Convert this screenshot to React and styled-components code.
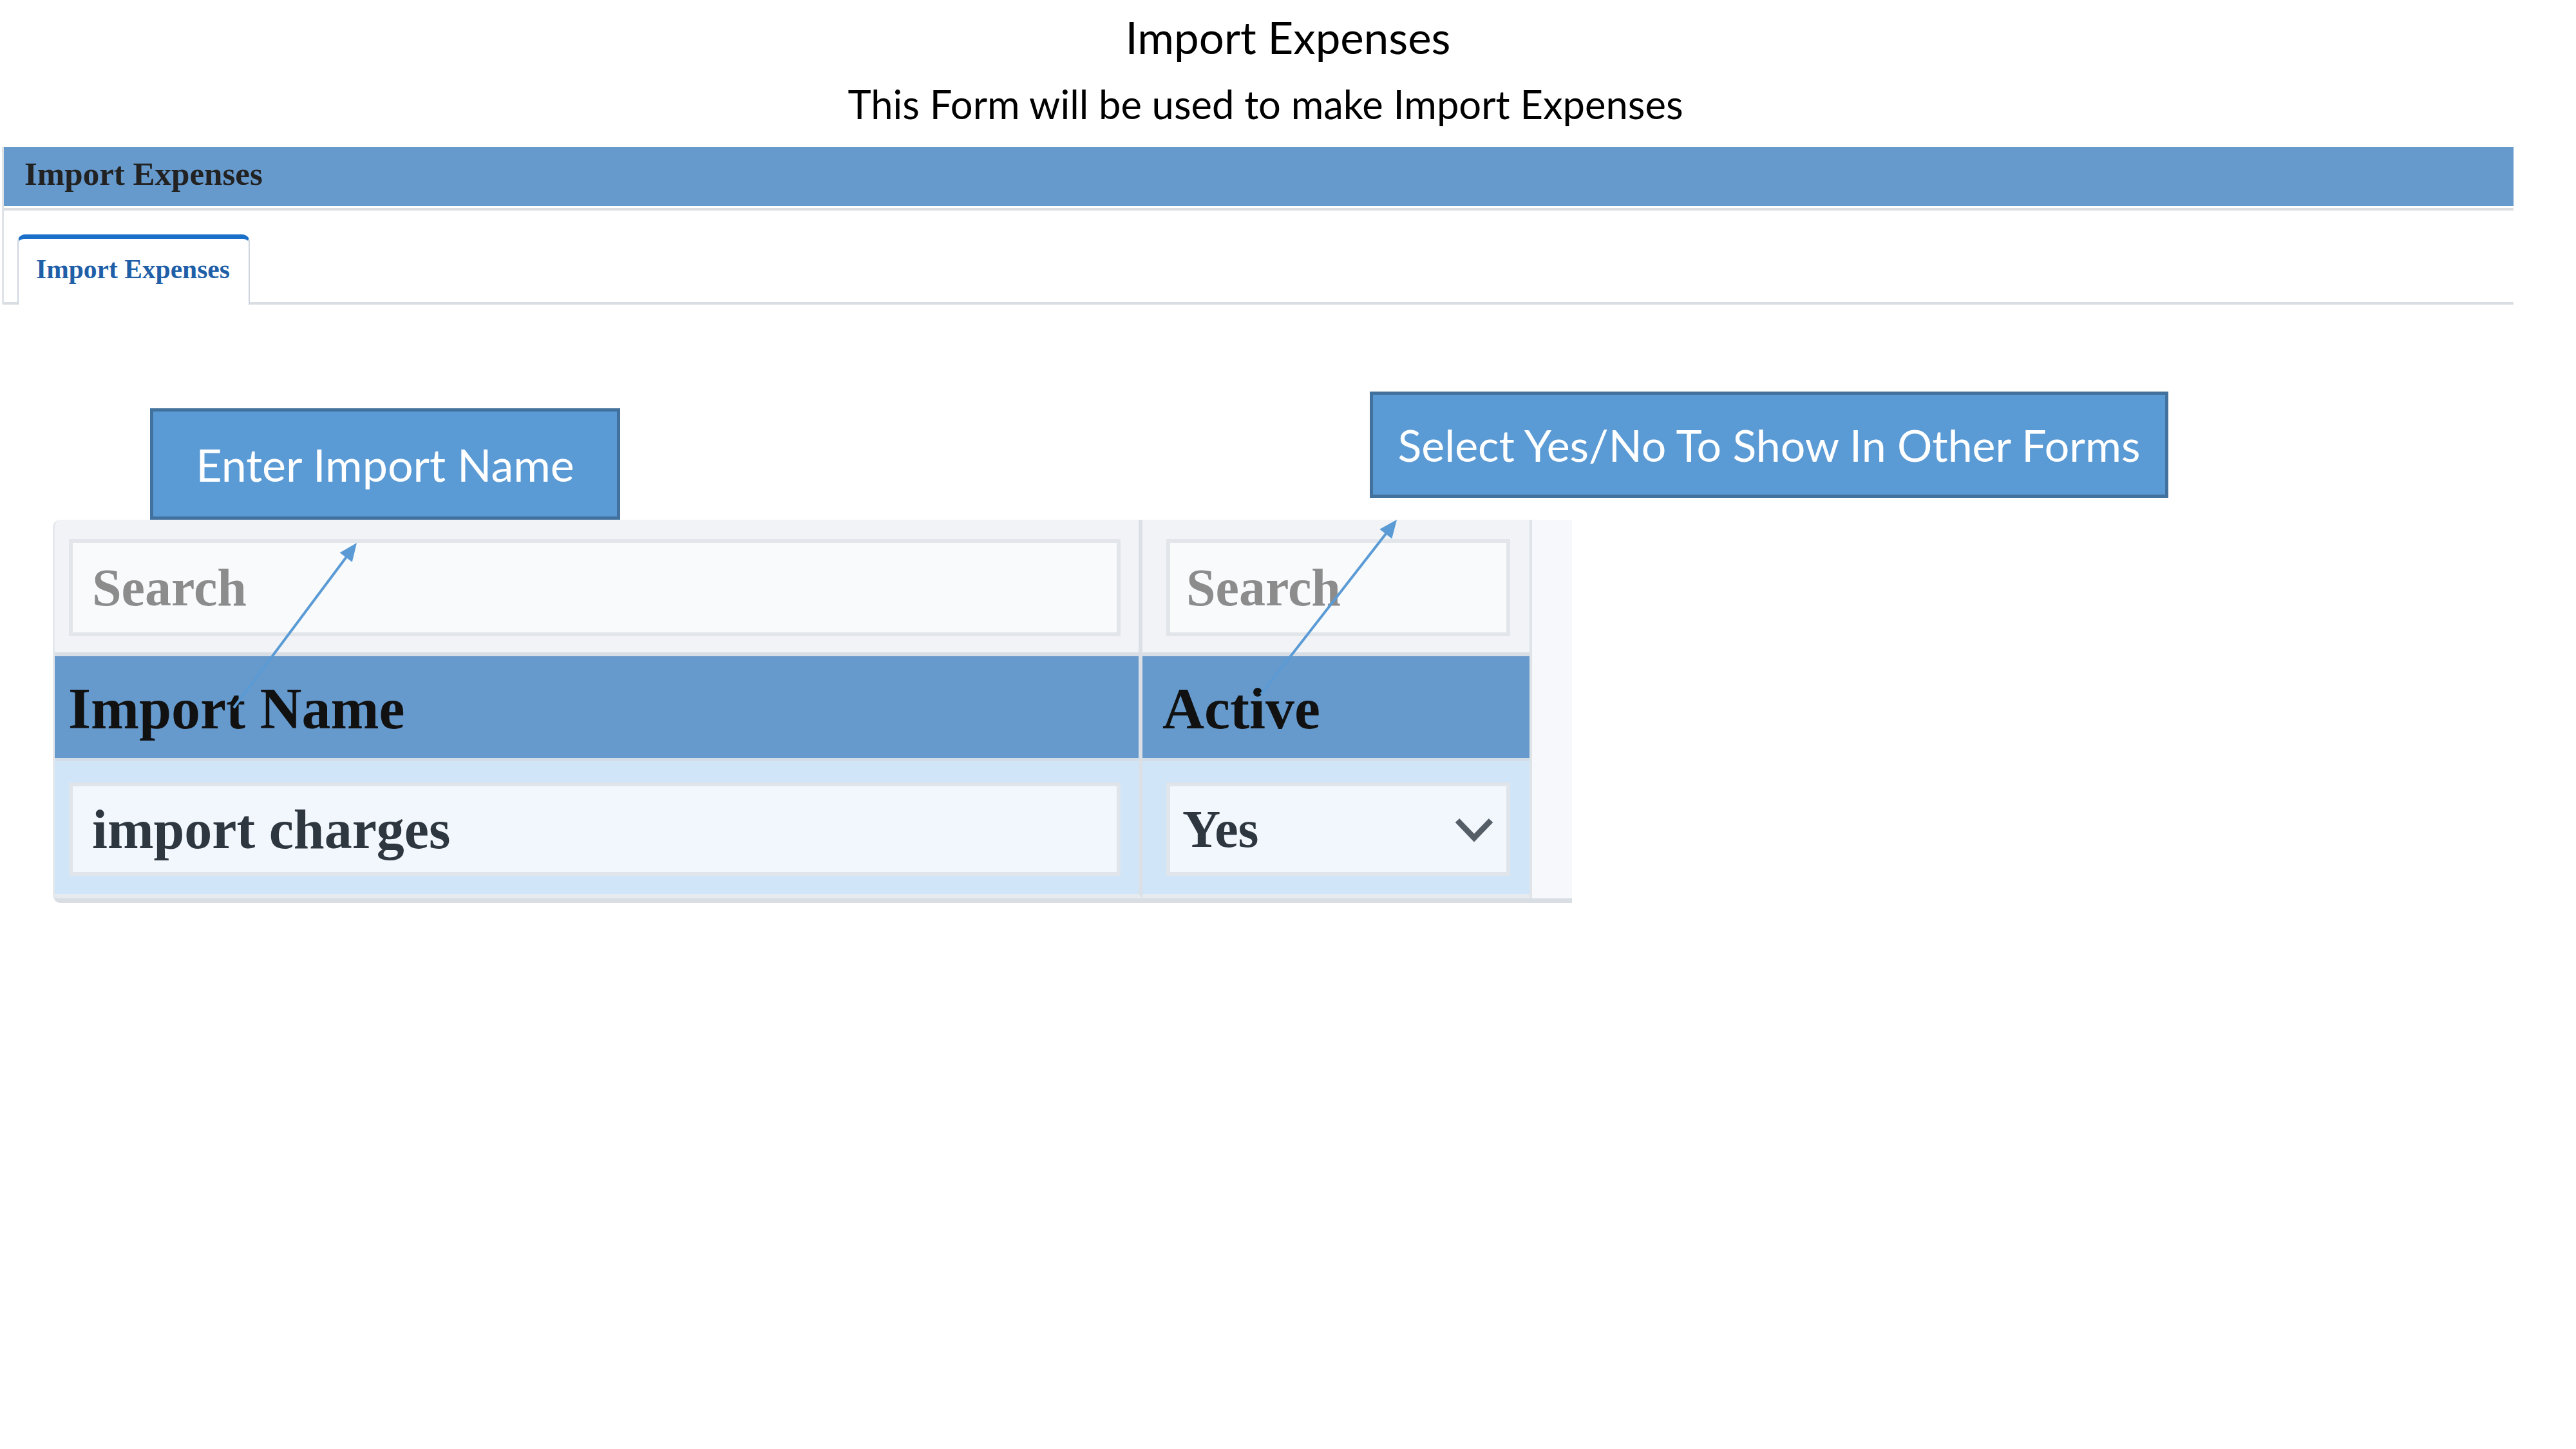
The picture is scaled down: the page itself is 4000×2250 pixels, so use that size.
import React from "react";
import styled, { createGlobalStyle } from "styled-components";

const GlobalStyle = createGlobalStyle`
  html, body { margin: 0; padding: 0; background: #ffffff; }
  body { width: 4000px; height: 2250px; overflow: hidden; font-family: Lato, "Open Sans", sans-serif; }
  *, *::before, *::after { box-sizing: border-box; }
`;

const Page = styled.div`
  position: relative;
  width: 4000px;
  height: 2250px;
  background: #ffffff;
`;

const Heading = styled.header`
  text-align: center;
  font-family: Lato, "Open Sans", sans-serif;
  color: #000000;
`;

const Title = styled.h1`
  margin: 0;
  padding-top: 18px;
  font-size: 69px;
  line-height: 80px;
  font-weight: 400;
`;

const Subtitle = styled.p`
  margin: 27px 0 0;
  padding-right: 70px;
  font-size: 61.5px;
  line-height: 72px;
  font-weight: 400;
`;

const FormFrame = styled.section`
  margin: 31px 0 0 3px;
  width: 3900px;
  border-left: 3px solid #dfe2e6;
`;

const TitleBar = styled.div`
  height: 92px;
  background: #6699cc;
  padding: 0 0 8px 32px;
  font-family: "Liberation Serif", "DejaVu Serif", serif;
  font-weight: 700;
  font-size: 51px;
  line-height: 84px;
  color: #222222;
`;

const Rule = styled.div`
  margin-top: 3px;
  height: 4px;
  background: #dcdfe2;
`;

const TabStrip = styled.nav`
  display: flex;
  align-items: flex-end;
  padding: 37px 0 0 21px;
  border-bottom: 4px solid #dadee3;
`;

const Tab = styled.div`
  margin-bottom: -4px;
  height: 109px;
  padding: 0 29px 8px 27px;
  background: #ffffff;
  border-top: 7px solid #1a6fc9;
  border-left: 2px solid #cdd5df;
  border-right: 2px solid #cdd5df;
  border-radius: 12px 12px 0 0;
  font-family: "Liberation Serif", "DejaVu Serif", serif;
  font-weight: 700;
  font-size: 41.5px;
  line-height: 94px;
  color: #1f5fa8;
`;

const CalloutRow = styled.div`
  display: flex;
  align-items: flex-start;
  margin-top: 135px;
  padding-left: 233px;
`;

const Callout = styled.div`
  display: flex;
  align-items: center;
  justify-content: center;
  width: ${(p) => p.$w}px;
  height: ${(p) => p.$h}px;
  margin-top: ${(p) => p.$top || 0}px;
  margin-left: ${(p) => p.$left || 0}px;
  background: #5b9bd5;
  border: 5px solid #41719c;
  color: #ffffff;
  font-family: Lato, "Open Sans", sans-serif;
  font-size: ${(p) => p.$size}px;
  white-space: nowrap;
`;

const Panel = styled.div`
  display: flex;
  margin-left: 82px;
  width: 2359px;
  background: #f1f3f6;
  border-left: 3px solid #e4e8ec;
  border-bottom: 7px solid #d8dee4;
  border-radius: 12px 0 0 12px;
  overflow: hidden;
`;

const Grid = styled.div`
  display: grid;
  grid-template-columns: 1689px 601px;
`;

const Gutter = styled.div`
  width: 66px;
  border-left: 4px solid #dfe4e9;
  background: #f6f8fb;
`;

const FilterCell = styled.div`
  height: 206px;
  padding: ${(p) => (p.$first ? "30px 28px 25px 22px" : "30px 30px 25px 37px")};
  border-right: ${(p) => (p.$first ? "6px solid #dbe0e6" : "none")};
`;

const HeaderCell = styled.div`
  height: 164px;
  padding: 6px 0 0 ${(p) => (p.$first ? 21 : 31)}px;
  background: #6699cc;
  border-top: 6px solid #d8dee5;
  border-right: ${(p) => (p.$first ? "6px solid #dbe0e6" : "none")};
  font-family: "Liberation Serif", "DejaVu Serif", serif;
  font-weight: 700;
  font-size: 90px;
  line-height: 152px;
  color: #111111;
`;

const BodyCell = styled.div`
  height: 218px;
  padding: ${(p) => (p.$first ? "33px 28px 0 22px" : "33px 30px 0 37px")};
  background: #d0e6f8;
  border-top: 5px solid #d3dde7;
  border-bottom: 7px solid #e6ebf0;
  border-right: ${(p) => (p.$first ? "6px solid #dbe0e6" : "none")};
`;

const SearchInput = styled.input`
  display: block;
  width: 100%;
  height: 151px;
  margin: 0;
  padding: 0 0 0 ${(p) => p.$pad}px;
  border: 6px solid #e2e6ea;
  border-radius: 0;
  background: #f8fafc;
  outline: none;
  font-family: "Liberation Serif", "DejaVu Serif", serif;
  font-weight: 700;
  font-size: 82px;
  color: #333333;
  &::placeholder { color: #8c8c8c; opacity: 1; }
`;

const ValueInput = styled.input`
  display: block;
  width: 100%;
  height: 145px;
  margin: 0;
  padding: 0 0 0 30px;
  border: 6px solid #dfe5eb;
  border-radius: 0;
  background: #f2f7fd;
  outline: none;
  font-family: "Liberation Serif", "DejaVu Serif", serif;
  font-weight: 700;
  font-size: 86px;
  color: #2e3640;
`;

const SelectBox = styled.div`
  display: flex;
  align-items: center;
  justify-content: space-between;
  height: 145px;
  padding: 0 19px;
  border: 6px solid #dfe5eb;
  background: #f2f7fd;
  font-family: "Liberation Serif", "DejaVu Serif", serif;
  font-weight: 700;
  font-size: 82px;
  line-height: 133px;
  color: #2e3640;
`;

const Overlay = styled.svg`
  position: absolute;
  top: 0;
  left: 0;
  width: 4000px;
  height: 2250px;
  pointer-events: none;
`;

const Chevron = () => (
  <svg width="62" height="40" viewBox="0 0 62 40" aria-hidden="true">
    <path d="M5 6 L31 33 L57 6" fill="none" stroke="#555d66" strokeWidth="9" />
  </svg>
);

export default function App() {
  return (
    <Page>
      <GlobalStyle />
      <Heading>
        <Title>Import Expenses</Title>
        <Subtitle>This Form will be used to make Import Expenses</Subtitle>
      </Heading>

      <FormFrame>
        <TitleBar>Import Expenses</TitleBar>
        <Rule />
        <TabStrip>
          <Tab>Import Expenses</Tab>
        </TabStrip>
      </FormFrame>

      <CalloutRow>
        <Callout $w={730} $h={173} $top={26} $size={70}>Enter Import Name</Callout>
        <Callout $w={1240} $h={165} $left={1164} $size={68}>Select Yes/No To Show In Other Forms</Callout>
      </CalloutRow>

      <Panel>
        <Grid>
          <FilterCell $first>
            <SearchInput $pad={30} placeholder="Search" readOnly />
          </FilterCell>
          <FilterCell>
            <SearchInput $pad={25} placeholder="Search" readOnly />
          </FilterCell>
          <HeaderCell $first>Import Name</HeaderCell>
          <HeaderCell>Active</HeaderCell>
          <BodyCell $first>
            <ValueInput defaultValue="import charges" readOnly />
          </BodyCell>
          <BodyCell>
            <SelectBox>
              <span>Yes</span>
              <Chevron />
            </SelectBox>
          </BodyCell>
        </Grid>
        <Gutter />
      </Panel>

      <Overlay viewBox="0 0 4000 2250">
        <line x1="363" y1="1099" x2="540" y2="862" stroke="#5b9bd5" strokeWidth="4" />
        <polygon points="554,843 546.8,872.7 527.6,858.3" fill="#5b9bd5" />
        <line x1="1958" y1="1078" x2="2155" y2="825" stroke="#5b9bd5" strokeWidth="4" />
        <polygon points="2169,807 2161.3,836.5 2142.3,821.7" fill="#5b9bd5" />
      </Overlay>
    </Page>
  );
}
